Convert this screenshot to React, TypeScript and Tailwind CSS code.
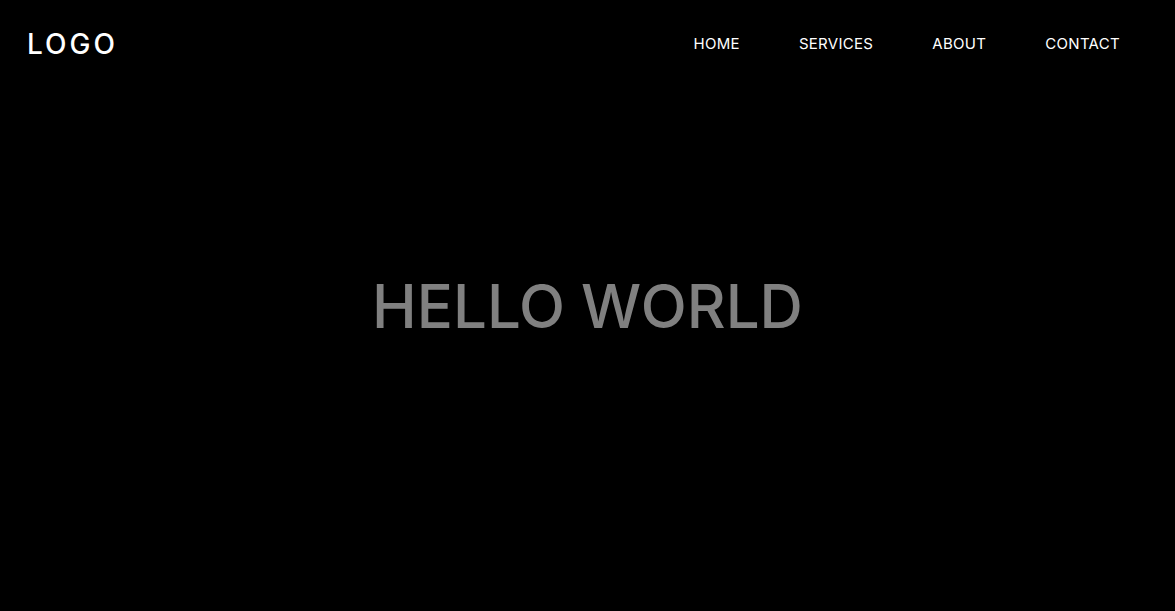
import React from "react"

const links = ["HOME", "SERVICES", "ABOUT", "CONTACT"]

const App: React.FC = () => {
  return (
    <div className="relative h-screen w-full bg-black font-['Inter',sans-serif]">
      {/* Header sits over the hero */}
      <header className="absolute inset-x-0 top-0 flex items-center justify-between pl-[27px] pr-[55px] h-[88px]">
        <div className="text-[28px] font-medium tracking-[3px] text-white">LOGO</div>
        <nav className="flex items-center gap-[59px]">
          {links.map((l) => (
            <a key={l} href="#" className="text-[15px] tracking-[0.3px] text-white">
              {l}
            </a>
          ))}
        </nav>
      </header>

      {/* Hero */}
      <section className="flex h-full items-center justify-center">
        <h1 className="text-[60px] font-medium text-[#808080]">HELLO WORLD</h1>
      </section>
    </div>
  )
}

export default App
